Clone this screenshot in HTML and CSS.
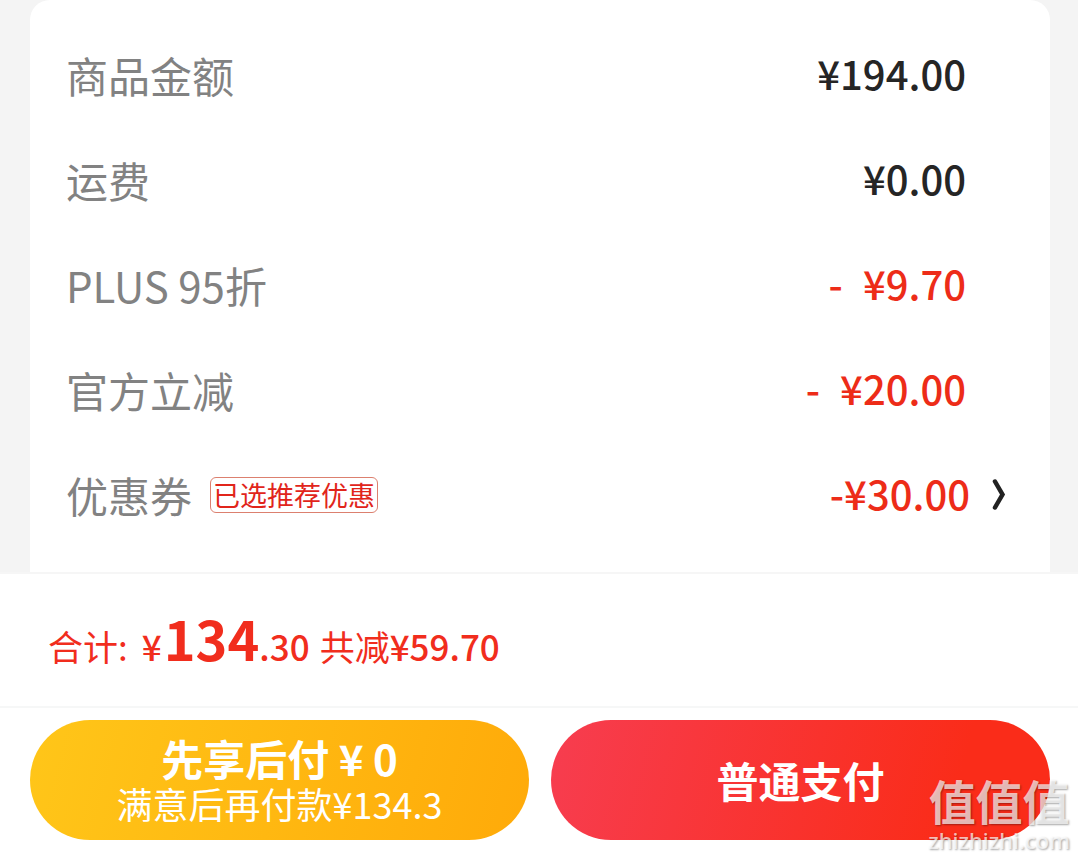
FILE: index.html
```html
<!DOCTYPE html>
<html lang="zh-CN">
<head>
<meta charset="utf-8">
<meta name="viewport" content="width=device-width, initial-scale=1">
<title>订单结算</title>
<link rel="stylesheet" href="styles.css">
</head>
<body>
<main class="summary">
  <dl class="card">
    <div class="row"><dt>商品金额</dt><dd class="price">¥194.00</dd></div>
    <div class="row"><dt>运费</dt><dd class="price">¥0.00</dd></div>
    <div class="row"><dt>PLUS 95折</dt><dd class="price off"><span class="minus">-</span>¥9.70</dd></div>
    <div class="row"><dt>官方立减</dt><dd class="price off"><span class="minus">-</span>¥20.00</dd></div>
    <div class="row coupon">
      <dt>优惠券 <span class="tag">已选推荐优惠</span></dt>
      <dd class="price off">-¥30.00
        <button class="more" type="button" aria-label="选择优惠券">
          <svg width="14" height="32" viewBox="0 0 14 32" aria-hidden="true"><path d="M3 2.5 L10.5 15.5 L3 28.5" fill="none" stroke="#222" stroke-width="4.5" stroke-linecap="round" stroke-linejoin="miter"/></svg>
        </button>
      </dd>
    </div>
  </dl>
</main>
<footer class="checkout">
  <p class="total">
    <span class="label">合计:</span>
    <span class="sum"><span class="yen">¥</span><strong>134</strong><span class="cents">.30</span></span>
    <span class="saved">共减<span class="saved-num">¥59.70</span></span>
  </p>
  <div class="actions">
    <button class="pay later" type="button"><span class="pay-title">先享后付 ¥ 0</span><span class="pay-sub">满意后再付款¥134.3</span></button>
    <button class="pay now" type="button"><span class="pay-title">普通支付</span></button>
  </div>
  <div class="watermark"><span class="mark">值值值</span><span class="site">zhizhizhi.com</span></div>
</footer>
</body>
</html>
```
FILE: styles.css
```css
* { box-sizing: border-box; }

body {
  margin: 0;
  background: #fff;
  color: #252525;
  font-family: "Noto Sans CJK SC", sans-serif;
}

button { border: 0; padding: 0; background: none; font: inherit; color: inherit; cursor: pointer; }

.summary {
  padding: 0 28px 0 30px;
  background: #f4f4f4;
  border-bottom: 2px solid #f6f6f6;
}

.card {
  margin: 0;
  padding: 22px 84px 25px 36px;
  background: #fff;
  border-radius: 20px 20px 0 0;
}

.row {
  display: flex;
  align-items: center;
  justify-content: space-between;
  height: 105px;
  font-size: 42px;
  line-height: 60px;
}

.row dt { display: flex; align-items: center; color: #828282; }
.row dd { margin: 0; }

.price {
  display: flex;
  align-items: center;
  font-size: 40px;
  font-weight: 500;
  line-height: 56px;
  padding-bottom: 4px;
}

.off { color: #ed2c18; }
.minus { margin-right: 20px; }

.coupon { margin-right: -40px; }

.tag {
  margin-left: 18px;
  padding: 0 2px;
  border: 1px solid #dc806f;
  border-radius: 6px;
  color: #e1251b;
  font-size: 27px;
  line-height: 34px;
}

.more { display: flex; margin-left: 22px; padding-top: 4px; }

.checkout { position: relative; }

.total {
  display: flex;
  align-items: baseline;
  margin: 0;
  height: 132px;
  padding: 20px 48px 0;
  color: #f12d1d;
  font-size: 35px;
  line-height: 88px;
}

.sum, .saved-num { font-weight: 500; }
.sum { margin: 0 10px 0 14px; }
.sum strong { margin-left: 2px; font-size: 54px; font-weight: 700; }

.actions {
  display: grid;
  grid-template-columns: 1fr 1fr;
  gap: 22px;
  padding: 12px 28px 18px 30px;
  border-top: 2px solid #f6f7f7;
}

.pay {
  display: flex;
  flex-direction: column;
  align-items: center;
  justify-content: center;
  height: 120px;
  border-radius: 60px;
  color: #fff;
}

.later { background: linear-gradient(105deg, #ffc619, #ffaa09); }
.now { background: linear-gradient(105deg, #f73d50, #fa2c19 80%); }

.pay-title { font-size: 42px; font-weight: 700; line-height: 46px; }
.pay-sub { font-size: 36px; line-height: 44px; }

.watermark {
  position: absolute;
  right: 8px;
  bottom: 5px;
  display: flex;
  flex-direction: column;
  align-items: center;
  color: rgba(255, 255, 255, 0.7);
  text-shadow: 1px 1px 2px rgba(0, 0, 0, 0.35);
  pointer-events: none;
}

.mark { font-size: 47px; font-weight: 700; line-height: 54px; }
.site { font-family: "Noto Sans", sans-serif; font-size: 22px; font-weight: 500; line-height: 26px; }
```
